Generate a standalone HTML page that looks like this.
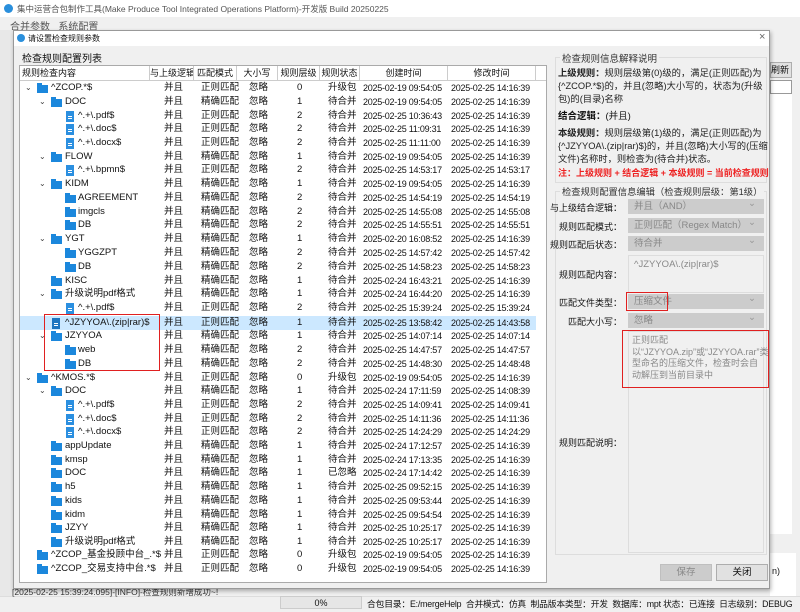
<!DOCTYPE html>
<html><head><meta charset="utf-8">
<style>
*{margin:0;padding:0;box-sizing:border-box}
body{width:800px;height:612px;overflow:hidden;background:#f0f0f0;font-family:"Liberation Sans","Noto Sans CJK SC",sans-serif;font-size:9.5px;color:#111;position:relative}
.a{position:absolute;white-space:nowrap}
.row{position:absolute;left:20px;width:516px;height:14px;line-height:14px;white-space:nowrap}
.row span{position:absolute;top:0;white-space:nowrap}
.c2{left:144px}.c3{left:181px}.c4{left:229px}.c5{left:277px}.c6{left:308px}
.c7,.c8{font-size:9px;letter-spacing:-0.25px}
.c7{left:343px}.c8{left:431px}
.fd{display:inline-block;position:absolute;width:11px;height:8px;background:#1b87dc;top:4px}
.fd:before{content:"";position:absolute;left:0;top:-2px;width:5px;height:2px;background:#1b87dc}
.fl{position:absolute;width:8px;height:11px;background:#2b8fe0;top:2px}
.fl:after{content:"";position:absolute;left:2px;top:5px;width:4px;height:1px;background:#fff;box-shadow:0 2px 0 #fff}
.ch{position:absolute;top:0;font-size:8px;color:#444}
.hd{position:absolute;top:66px;height:15px;line-height:15px;background:#fff;border-right:1px solid #ccc;border-bottom:1px solid #ccc;text-align:center;font-size:9px;white-space:nowrap;overflow:hidden}
.cb{position:absolute;left:628px;width:136px;height:15px;background:#ccc;color:#888;line-height:15px;padding-left:6px;font-size:9.5px;white-space:nowrap}
.cb:after{content:"⌄";position:absolute;right:8px;top:-3px;color:#999}
.lb{position:absolute;width:100px;text-align:right;left:522px;font-size:9px;white-space:nowrap}
</style></head><body>
<!-- background app -->
<div class="a" style="left:0;top:0;width:800px;height:17px;background:#fff"></div>
<div class="a" style="left:4px;top:4px;width:9px;height:9px;border-radius:50%;background:#2a8fdc"></div>
<div class="a" style="left:17px;top:3px;color:#555;font-size:8.5px">集中运营合包制作工具(Make Produce Tool Integrated Operations Platform)-开发版 Build 20250225</div>
<div class="a" style="left:10px;top:18px;color:#555;font-size:10px">合并参数&nbsp;&nbsp;&nbsp;系统配置</div>
<div class="a" style="left:0;top:30px;width:13px;height:570px;background:#e8e8e8"></div>
<div class="a" style="left:770px;top:30px;width:30px;height:570px;background:#f0f0f0"></div>
<div class="a" style="left:770px;top:62px;width:22px;height:16px;background:#e1e1e1;border:1px solid #adadad;font-size:9px;line-height:14px">刷新</div>
<div class="a" style="left:770px;top:80px;width:22px;height:14px;background:#fff;border:1px solid #999"></div>
<div class="a" style="left:770px;top:94px;width:22px;height:440px;background:#fff"></div>
<div class="a" style="left:770px;top:553px;width:26px;height:44px;background:#fff"></div>
<div class="a" style="left:772px;top:566px;font-size:9px">n)</div>
<div class="a" style="left:0;top:596px;width:800px;height:16px;background:#f0f0f0;border-top:1px solid #ddd"></div>
<div class="a" style="left:12px;top:586px;font-size:8.5px;color:#333">[2025-02-25 15:39:24.095]-[INFO]-检查规则新增成功~!</div>
<div class="a" style="left:280px;top:596px;width:82px;height:13px;background:#e6e6e6;border:1px solid #ccc;text-align:center;line-height:12px;font-size:9px">0%</div>
<div class="a" style="left:367px;top:597px;font-size:8.8px;letter-spacing:-0.2px">合包目录：E:/mergeHelp&nbsp;&nbsp;合并模式：仿真&nbsp;&nbsp;制品版本类型：开发&nbsp;&nbsp;数据库：mpt 状态：已连接&nbsp;&nbsp;日志级别：DEBUG</div>

<!-- dialog -->
<div class="a" style="left:13px;top:30px;width:757px;height:559px;background:#f0f0f0;border:1px solid #999;box-shadow:1px 2px 4px rgba(0,0,0,.3)"></div>
<div class="a" style="left:14px;top:31px;width:755px;height:15px;background:#fff"></div>
<div class="a" style="left:17px;top:34px;width:8px;height:8px;border-radius:50%;background:#2a8fdc"></div>
<div class="a" style="left:28px;top:33px;font-size:8px">请设置检查规则参数</div>
<div class="a" style="left:759px;top:31px;font-size:11px;color:#666">×</div>

<div class="a" style="left:22px;top:50px;font-size:10px">检查规则配置列表</div>
<div class="a" style="left:19px;top:65px;width:528px;height:518px;background:#fff;border:1px solid #aaa"></div>
<div class="hd" style="left:20px;width:130px;text-align:left;padding-left:2px">规则检查内容</div>
<div class="hd" style="left:150px;width:44px">与上级逻辑</div>
<div class="hd" style="left:194px;width:43px">匹配模式</div>
<div class="hd" style="left:237px;width:41px">大小写</div>
<div class="hd" style="left:278px;width:42px">规则层级</div>
<div class="hd" style="left:320px;width:40px">规则状态</div>
<div class="hd" style="left:360px;width:88px">创建时间</div>
<div class="hd" style="left:448px;width:88px">修改时间</div>
<div class="hd" style="left:536px;width:10px;border-right:none"></div>

<div class="a" style="left:20px;top:316px;width:516px;height:14px;background:#cce8ff"></div>

<div class="row" style="top:81px"><span class="ch" style="left:5px">⌄</span><i class="fd" style="left:17px"></i><span style="left:31px">^ZCOP.*$</span><span class="c2">并且</span><span class="c3">正则匹配</span><span class="c4">忽略</span><span class="c5">0</span><span class="c6">升级包</span><span class="c7">2025-02-19 09:54:05</span><span class="c8">2025-02-25 14:16:39</span></div>
<div class="row" style="top:95px"><span class="ch" style="left:19px">⌄</span><i class="fd" style="left:31px"></i><span style="left:45px">DOC</span><span class="c2">并且</span><span class="c3">精确匹配</span><span class="c4">忽略</span><span class="c5">1</span><span class="c6">待合并</span><span class="c7">2025-02-19 09:54:05</span><span class="c8">2025-02-25 14:16:39</span></div>
<div class="row" style="top:109px"><i class="fl" style="left:46px"></i><span style="left:58px">^.+\.pdf$</span><span class="c2">并且</span><span class="c3">正则匹配</span><span class="c4">忽略</span><span class="c5">2</span><span class="c6">待合并</span><span class="c7">2025-02-25 10:36:43</span><span class="c8">2025-02-25 14:16:39</span></div>
<div class="row" style="top:122px"><i class="fl" style="left:46px"></i><span style="left:58px">^.+\.doc$</span><span class="c2">并且</span><span class="c3">正则匹配</span><span class="c4">忽略</span><span class="c5">2</span><span class="c6">待合并</span><span class="c7">2025-02-25 11:09:31</span><span class="c8">2025-02-25 14:16:39</span></div>
<div class="row" style="top:136px"><i class="fl" style="left:46px"></i><span style="left:58px">^.+\.docx$</span><span class="c2">并且</span><span class="c3">正则匹配</span><span class="c4">忽略</span><span class="c5">2</span><span class="c6">待合并</span><span class="c7">2025-02-25 11:11:00</span><span class="c8">2025-02-25 14:16:39</span></div>
<div class="row" style="top:150px"><span class="ch" style="left:19px">⌄</span><i class="fd" style="left:31px"></i><span style="left:45px">FLOW</span><span class="c2">并且</span><span class="c3">精确匹配</span><span class="c4">忽略</span><span class="c5">1</span><span class="c6">待合并</span><span class="c7">2025-02-19 09:54:05</span><span class="c8">2025-02-25 14:16:39</span></div>
<div class="row" style="top:163px"><i class="fl" style="left:46px"></i><span style="left:58px">^.+\.bpmn$</span><span class="c2">并且</span><span class="c3">正则匹配</span><span class="c4">忽略</span><span class="c5">2</span><span class="c6">待合并</span><span class="c7">2025-02-25 14:53:17</span><span class="c8">2025-02-25 14:53:17</span></div>
<div class="row" style="top:177px"><span class="ch" style="left:19px">⌄</span><i class="fd" style="left:31px"></i><span style="left:45px">KIDM</span><span class="c2">并且</span><span class="c3">精确匹配</span><span class="c4">忽略</span><span class="c5">1</span><span class="c6">待合并</span><span class="c7">2025-02-19 09:54:05</span><span class="c8">2025-02-25 14:16:39</span></div>
<div class="row" style="top:191px"><i class="fd" style="left:45px"></i><span style="left:58px">AGREEMENT</span><span class="c2">并且</span><span class="c3">精确匹配</span><span class="c4">忽略</span><span class="c5">2</span><span class="c6">待合并</span><span class="c7">2025-02-25 14:54:19</span><span class="c8">2025-02-25 14:54:19</span></div>
<div class="row" style="top:205px"><i class="fd" style="left:45px"></i><span style="left:58px">imgcls</span><span class="c2">并且</span><span class="c3">精确匹配</span><span class="c4">忽略</span><span class="c5">2</span><span class="c6">待合并</span><span class="c7">2025-02-25 14:55:08</span><span class="c8">2025-02-25 14:55:08</span></div>
<div class="row" style="top:218px"><i class="fd" style="left:45px"></i><span style="left:58px">DB</span><span class="c2">并且</span><span class="c3">精确匹配</span><span class="c4">忽略</span><span class="c5">2</span><span class="c6">待合并</span><span class="c7">2025-02-25 14:55:51</span><span class="c8">2025-02-25 14:55:51</span></div>
<div class="row" style="top:232px"><span class="ch" style="left:19px">⌄</span><i class="fd" style="left:31px"></i><span style="left:45px">YGT</span><span class="c2">并且</span><span class="c3">精确匹配</span><span class="c4">忽略</span><span class="c5">1</span><span class="c6">待合并</span><span class="c7">2025-02-20 16:08:52</span><span class="c8">2025-02-25 14:16:39</span></div>
<div class="row" style="top:246px"><i class="fd" style="left:45px"></i><span style="left:58px">YGGZPT</span><span class="c2">并且</span><span class="c3">精确匹配</span><span class="c4">忽略</span><span class="c5">2</span><span class="c6">待合并</span><span class="c7">2025-02-25 14:57:42</span><span class="c8">2025-02-25 14:57:42</span></div>
<div class="row" style="top:260px"><i class="fd" style="left:45px"></i><span style="left:58px">DB</span><span class="c2">并且</span><span class="c3">精确匹配</span><span class="c4">忽略</span><span class="c5">2</span><span class="c6">待合并</span><span class="c7">2025-02-25 14:58:23</span><span class="c8">2025-02-25 14:58:23</span></div>
<div class="row" style="top:274px"><i class="fd" style="left:31px"></i><span style="left:45px">KISC</span><span class="c2">并且</span><span class="c3">精确匹配</span><span class="c4">忽略</span><span class="c5">1</span><span class="c6">待合并</span><span class="c7">2025-02-24 16:43:21</span><span class="c8">2025-02-25 14:16:39</span></div>
<div class="row" style="top:287px"><span class="ch" style="left:19px">⌄</span><i class="fd" style="left:31px"></i><span style="left:45px">升级说明pdf格式</span><span class="c2">并且</span><span class="c3">精确匹配</span><span class="c4">忽略</span><span class="c5">1</span><span class="c6">待合并</span><span class="c7">2025-02-24 16:44:20</span><span class="c8">2025-02-25 14:16:39</span></div>
<div class="row" style="top:301px"><i class="fl" style="left:46px"></i><span style="left:58px">^.+\.pdf$</span><span class="c2">并且</span><span class="c3">正则匹配</span><span class="c4">忽略</span><span class="c5">2</span><span class="c6">待合并</span><span class="c7">2025-02-25 15:39:24</span><span class="c8">2025-02-25 15:39:24</span></div>
<div class="row" style="top:316px"><i class="fl" style="left:32px;background:#1d75c0"></i><span style="left:45px">^JZYYOA\.(zip|rar)$</span><span class="c2">并且</span><span class="c3">正则匹配</span><span class="c4">忽略</span><span class="c5">1</span><span class="c6">待合并</span><span class="c7">2025-02-25 13:58:42</span><span class="c8">2025-02-25 14:43:58</span></div>
<div class="row" style="top:329px"><span class="ch" style="left:19px">⌄</span><i class="fd" style="left:31px"></i><span style="left:45px">JZYYOA</span><span class="c2">并且</span><span class="c3">精确匹配</span><span class="c4">忽略</span><span class="c5">1</span><span class="c6">待合并</span><span class="c7">2025-02-25 14:07:14</span><span class="c8">2025-02-25 14:07:14</span></div>
<div class="row" style="top:343px"><i class="fd" style="left:45px"></i><span style="left:58px">web</span><span class="c2">并且</span><span class="c3">精确匹配</span><span class="c4">忽略</span><span class="c5">2</span><span class="c6">待合并</span><span class="c7">2025-02-25 14:47:57</span><span class="c8">2025-02-25 14:47:57</span></div>
<div class="row" style="top:357px"><i class="fd" style="left:45px"></i><span style="left:58px">DB</span><span class="c2">并且</span><span class="c3">精确匹配</span><span class="c4">忽略</span><span class="c5">2</span><span class="c6">待合并</span><span class="c7">2025-02-25 14:48:30</span><span class="c8">2025-02-25 14:48:48</span></div>
<div class="row" style="top:371px"><span class="ch" style="left:5px">⌄</span><i class="fd" style="left:17px"></i><span style="left:31px">^KMOS.*$</span><span class="c2">并且</span><span class="c3">正则匹配</span><span class="c4">忽略</span><span class="c5">0</span><span class="c6">升级包</span><span class="c7">2025-02-19 09:54:05</span><span class="c8">2025-02-25 14:16:39</span></div>
<div class="row" style="top:384px"><span class="ch" style="left:19px">⌄</span><i class="fd" style="left:31px"></i><span style="left:45px">DOC</span><span class="c2">并且</span><span class="c3">精确匹配</span><span class="c4">忽略</span><span class="c5">1</span><span class="c6">待合并</span><span class="c7">2025-02-24 17:11:59</span><span class="c8">2025-02-25 14:08:39</span></div>
<div class="row" style="top:398px"><i class="fl" style="left:46px"></i><span style="left:58px">^.+\.pdf$</span><span class="c2">并且</span><span class="c3">正则匹配</span><span class="c4">忽略</span><span class="c5">2</span><span class="c6">待合并</span><span class="c7">2025-02-25 14:09:41</span><span class="c8">2025-02-25 14:09:41</span></div>
<div class="row" style="top:412px"><i class="fl" style="left:46px"></i><span style="left:58px">^.+\.doc$</span><span class="c2">并且</span><span class="c3">正则匹配</span><span class="c4">忽略</span><span class="c5">2</span><span class="c6">待合并</span><span class="c7">2025-02-25 14:11:36</span><span class="c8">2025-02-25 14:11:36</span></div>
<div class="row" style="top:425px"><i class="fl" style="left:46px"></i><span style="left:58px">^.+\.docx$</span><span class="c2">并且</span><span class="c3">正则匹配</span><span class="c4">忽略</span><span class="c5">2</span><span class="c6">待合并</span><span class="c7">2025-02-25 14:24:29</span><span class="c8">2025-02-25 14:24:29</span></div>
<div class="row" style="top:439px"><i class="fd" style="left:31px"></i><span style="left:45px">appUpdate</span><span class="c2">并且</span><span class="c3">精确匹配</span><span class="c4">忽略</span><span class="c5">1</span><span class="c6">待合并</span><span class="c7">2025-02-24 17:12:57</span><span class="c8">2025-02-25 14:16:39</span></div>
<div class="row" style="top:453px"><i class="fd" style="left:31px"></i><span style="left:45px">kmsp</span><span class="c2">并且</span><span class="c3">精确匹配</span><span class="c4">忽略</span><span class="c5">1</span><span class="c6">待合并</span><span class="c7">2025-02-24 17:13:35</span><span class="c8">2025-02-25 14:16:39</span></div>
<div class="row" style="top:466px"><i class="fd" style="left:31px"></i><span style="left:45px">DOC</span><span class="c2">并且</span><span class="c3">精确匹配</span><span class="c4">忽略</span><span class="c5">1</span><span class="c6">已忽略</span><span class="c7">2025-02-24 17:14:42</span><span class="c8">2025-02-25 14:16:39</span></div>
<div class="row" style="top:480px"><i class="fd" style="left:31px"></i><span style="left:45px">h5</span><span class="c2">并且</span><span class="c3">精确匹配</span><span class="c4">忽略</span><span class="c5">1</span><span class="c6">待合并</span><span class="c7">2025-02-25 09:52:15</span><span class="c8">2025-02-25 14:16:39</span></div>
<div class="row" style="top:494px"><i class="fd" style="left:31px"></i><span style="left:45px">kids</span><span class="c2">并且</span><span class="c3">精确匹配</span><span class="c4">忽略</span><span class="c5">1</span><span class="c6">待合并</span><span class="c7">2025-02-25 09:53:44</span><span class="c8">2025-02-25 14:16:39</span></div>
<div class="row" style="top:508px"><i class="fd" style="left:31px"></i><span style="left:45px">kidm</span><span class="c2">并且</span><span class="c3">精确匹配</span><span class="c4">忽略</span><span class="c5">1</span><span class="c6">待合并</span><span class="c7">2025-02-25 09:54:54</span><span class="c8">2025-02-25 14:16:39</span></div>
<div class="row" style="top:521px"><i class="fd" style="left:31px"></i><span style="left:45px">JZYY</span><span class="c2">并且</span><span class="c3">精确匹配</span><span class="c4">忽略</span><span class="c5">1</span><span class="c6">待合并</span><span class="c7">2025-02-25 10:25:17</span><span class="c8">2025-02-25 14:16:39</span></div>
<div class="row" style="top:535px"><i class="fd" style="left:31px"></i><span style="left:45px">升级说明pdf格式</span><span class="c2">并且</span><span class="c3">精确匹配</span><span class="c4">忽略</span><span class="c5">1</span><span class="c6">待合并</span><span class="c7">2025-02-25 10:25:17</span><span class="c8">2025-02-25 14:16:39</span></div>
<div class="row" style="top:548px"><i class="fd" style="left:17px"></i><span style="left:31px">^ZCOP_基金投顾中台_.*$</span><span class="c2">并且</span><span class="c3">正则匹配</span><span class="c4">忽略</span><span class="c5">0</span><span class="c6">升级包</span><span class="c7">2025-02-19 09:54:05</span><span class="c8">2025-02-25 14:16:39</span></div>
<div class="row" style="top:562px"><i class="fd" style="left:17px"></i><span style="left:31px">^ZCOP_交易支持中台.*$</span><span class="c2">并且</span><span class="c3">正则匹配</span><span class="c4">忽略</span><span class="c5">0</span><span class="c6">升级包</span><span class="c7">2025-02-19 09:54:05</span><span class="c8">2025-02-25 14:16:39</span></div>

<div class="a" style="left:44px;top:314px;width:116px;height:57px;border:1.5px solid #e02020"></div>

<!-- right panel -->
<div class="a" style="left:555px;top:57px;width:212px;height:126px;border:1px solid #ddd"></div>
<div class="a" style="left:560px;top:51px;background:#f0f0f0;padding:0 2px;font-size:9.5px;color:#333">检查规则信息解释说明</div>
<div class="a" style="left:558px;top:67px;width:210px;white-space:normal;line-height:13px;font-size:9.3px;color:#222"><b>上级规则：</b>规则层级第(0)级的，满足(正则匹配)为{^ZCOP.*$}的，并且(忽略)大小写的，状态为(升级包)的(目录)名称</div>
<div class="a" style="left:558px;top:108px;font-size:9.5px"><b>结合逻辑：</b>(并且)</div>
<div class="a" style="left:558px;top:127px;width:210px;white-space:normal;line-height:13px;font-size:9.3px;color:#222"><b>本级规则：</b>规则层级第(1)级的，满足(正则匹配)为{^JZYYOA\.(zip|rar)$}的，并且(忽略)大小写的(压缩文件)名称时，则检查为(待合并)状态。</div>
<div class="a" style="left:558px;top:166px;font-size:9px;color:#ee2222;font-weight:bold">注：上级规则 + 结合逻辑 + 本级规则 = 当前检查规则</div>

<div class="a" style="left:555px;top:191px;width:212px;height:364px;border:1px solid #ddd"></div>
<div class="a" style="left:560px;top:184px;background:#f0f0f0;padding:0 2px;font-size:9.3px;color:#333">检查规则配置信息编辑（检查规则层级：第1级）</div>
<div class="lb" style="top:201px">与上级结合逻辑：</div><div class="cb" style="top:199px">并且（AND）</div>
<div class="lb" style="top:220px">规则匹配模式：</div><div class="cb" style="top:218px">正则匹配（Regex Match）</div>
<div class="lb" style="top:238px">规则匹配后状态：</div><div class="cb" style="top:236px">待合并</div>
<div class="a" style="left:628px;top:255px;width:136px;height:38px;border:1px solid #ddd;color:#888;padding:3px 5px">^JZYYOA\.(zip|rar)$</div>
<div class="lb" style="top:268px">规则匹配内容：</div>
<div class="lb" style="top:296px">匹配文件类型：</div><div class="cb" style="top:294px">压缩文件</div>
<div class="a" style="left:626px;top:292px;width:42px;height:19px;border:1.5px solid #e02020"></div>
<div class="lb" style="top:315px">匹配大小写：</div><div class="cb" style="top:313px">忽略</div>
<div class="a" style="left:628px;top:331px;width:136px;height:222px;border:1px solid #ddd"></div>
<div class="a" style="left:622px;top:330px;width:147px;height:58px;border:1.5px solid #e02020"></div>
<div class="a" style="left:632px;top:335px;width:134px;white-space:normal;line-height:11.5px;font-size:9px;color:#888">正则匹配<br>以“JZYYOA.zip”或“JZYYOA.rar”类型命名的压缩文件，检查时会自动解压到当前目录中</div>
<div class="lb" style="top:436px">规则匹配说明：</div>

<div class="a" style="left:660px;top:564px;width:52px;height:17px;background:#ccc;border:1px solid #bfbfbf;text-align:center;line-height:15px;color:#888">保存</div>
<div class="a" style="left:716px;top:564px;width:52px;height:17px;background:#e1e1e1;border:1px solid #adadad;text-align:center;line-height:15px">关闭</div>
</body></html>
